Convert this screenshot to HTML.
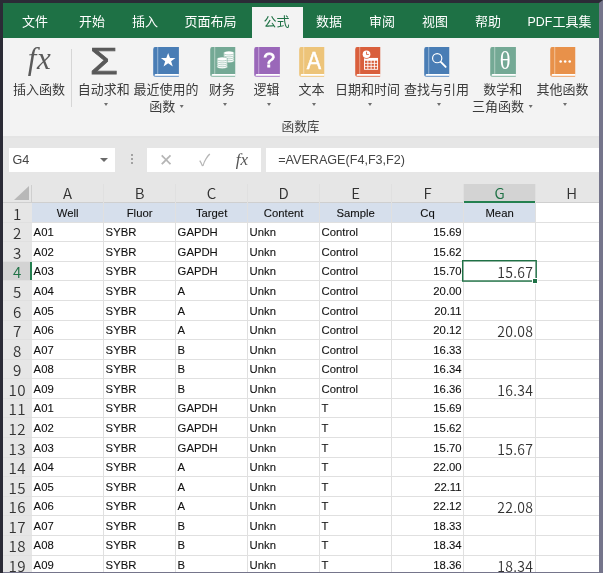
<!DOCTYPE html><html lang="zh-CN"><head><meta charset="utf-8"><title>Excel</title><style>*{box-sizing:border-box;margin:0;padding:0}
html,body{width:603px;height:573px;overflow:hidden;background:#fff}
body{font-family:"Liberation Sans","Noto Sans CJK SC",sans-serif;color:#333}
#app{position:relative;width:603px;height:573px;overflow:hidden;background:#fff;filter:blur(0.3px)}
#app div{position:absolute}
#bl{left:0;top:0;width:3px;height:573px;background:#2b2b36}
#bt{left:0;top:0;width:603px;height:3px;background:#2b2b36}
#br{left:599px;top:0;width:4px;height:573px;background:#75758b;clip-path:polygon(0 3px,4px 0,4px 100%,0 100%)}
#bb{left:3px;top:572px;width:600px;height:1px;background:#75758b}
#tabs{left:3px;top:3px;width:596px;height:35px;background:#1e7145}
.tab{top:1.3px;height:35px;line-height:36px;font-size:13px;color:#fff;text-align:center;white-space:nowrap;transform:translateX(-50%)}
#act{left:248.6px;top:4px;width:51px;height:31px;background:#f3f3f3}
.tab.on{color:#1e7145}
#ribbon{left:3px;top:38px;width:596px;height:98px;background:#f3f3f3}
#ribline{left:3px;top:136px;width:596px;height:1.5px;background:#e4e4e4}
#fbar{left:3px;top:137.5px;width:596px;height:46px;background:#e6e6e6}
.lbl{font-size:13px;line-height:16px;color:#3b3b3b;text-align:center;white-space:nowrap;transform:translateX(-50%)}
.ico{transform:translateX(-50%)}
.arr{width:0;height:0;border-left:2.8px solid transparent;border-right:2.8px solid transparent;border-top:3.3px solid #6e6e6e;transform:translateX(-50%)}
#grid{left:0;top:0;width:599px;height:572px}
.ch{top:183.5px;height:19px;line-height:17px;font-size:15px;text-align:center;color:#333;font-family:"Noto Sans CJK SC","Liberation Sans",sans-serif;font-weight:350;background:#e6e6e6}
.ch{border-bottom:1px solid #cfcfcf}
#corner{border-bottom:1px solid #cfcfcf}
.ch.sel{background:#d3d3d3;color:#1e7145;border-bottom:0}
.ch.sel::after{content:"";position:absolute;left:0;right:0;bottom:0;height:1.8px;background:#248050}
.rh{left:3px;width:28.6px;font-size:15.2px;letter-spacing:0.4px;text-align:center;color:#333;font-family:"Noto Sans CJK SC","Liberation Sans",sans-serif;font-weight:350;background:#e6e6e6;line-height:21.2px}
.rh.sel{background:#d3d3d3;color:#1e7145}
.rh.sel::after{content:"";position:absolute;right:0;top:0;bottom:0;width:1.8px;background:#248050}
.rhl{left:3px;width:28.6px;height:1px;background:#cfcfcf}
.chl{top:185px;height:17px;width:1px;background:#cfcfcf}
#hline{display:none}
.band{background:#d6dfec}
.hl{left:3px;width:596px;height:1px;background:#e0e0e0}
.vl{top:183.5px;height:389px;width:1px;background:#e0e0e0}
.c{font-size:11.3px;line-height:20.2px;color:#111;-webkit-text-stroke:0.1px #111;padding-left:2px;white-space:nowrap}
.c.hd{text-align:center;padding-left:0}
.c.num{text-align:right;padding-right:2px}
.c.mean{text-align:right;padding-right:2.3px;font-size:14px;letter-spacing:0.3px;-webkit-text-stroke:0;color:#333;font-family:"Noto Sans CJK SC","Liberation Sans",sans-serif;font-weight:350;line-height:22px}
.selbox{border:1.4px solid #1e7145}
.handle{width:3.9px;height:3.9px;background:#1e7145;border:0.9px solid #fff;box-sizing:content-box}
#ribbon svg{position:absolute}
#fx{font-family:"Liberation Serif",serif;font-style:italic;font-size:31px;line-height:36px;color:#5a5a5a;transform:translateX(-50%);white-space:nowrap;letter-spacing:0.6px}
#sigma{font-family:"Liberation Sans",sans-serif;font-size:36px;line-height:36px;color:#595959;-webkit-text-stroke:0.75px #595959;transform:translateX(-50%) scaleX(1.27)}
.sep{width:1px;background:#d6d6d6}
.ar{display:inline-block;width:0;height:0;border-left:2.8px solid transparent;border-right:2.8px solid transparent;border-top:3.3px solid #6e6e6e;vertical-align:middle;margin-left:1px;position:relative;top:-1px}
.glbl{font-size:12.7px;line-height:15px;color:#444;transform:translateX(-50%);white-space:nowrap}
#namebox{left:5.5px;top:10.6px;width:106.5px;height:24.2px;background:#fff;font-size:12.6px;line-height:25.6px;padding-left:4px;color:#444}
.dots{width:2px;height:2px;background:#a2a2a2}
#fbtns{left:144.3px;top:10.6px;width:114.2px;height:24.2px;background:#fff}
#fbtns span{position:absolute;line-height:25px}
#fxs{font-family:"Liberation Serif",serif;font-style:italic;font-size:17px;color:#555}
#finput{left:262.5px;top:10.6px;width:340px;height:24.2px;background:#fff;font-size:12.6px;line-height:25.6px;padding-left:12.7px;color:#444}
#corner{left:3px;top:183.5px;width:28.7px;height:19px;background:#e6e6e6}
#corner i{position:absolute;left:11px;top:2.5px;width:0;height:0;border-left:15px solid transparent;border-bottom:14.5px solid #b8b8b8}
</style></head><body><div id="app">
<div id="tabs">
<div id="act"></div>
<div class="tab" style="left:32px">文件</div>
<div class="tab" style="left:89px">开始</div>
<div class="tab" style="left:142px">插入</div>
<div class="tab" style="left:207.5px">页面布局</div>
<div class="tab on" style="left:273.4px">公式</div>
<div class="tab" style="left:326px">数据</div>
<div class="tab" style="left:379px">审阅</div>
<div class="tab" style="left:432px">视图</div>
<div class="tab" style="left:485px">帮助</div>
<div class="tab" style="left:556.5px"><span style="font-size:12.4px">PDF</span>工具集</div>
</div>
<div id="ribbon">
<div id="fx" style="left:36.5px;top:3px">fx</div>
<div class="sep" style="left:68.2px;top:11px;height:58px"></div>
<div id="sigma" style="left:100.7px;top:6.3px">Σ</div>
<div class="lbl" style="left:36px;top:44px">插入函数</div>
<div class="lbl" style="left:100.8px;top:44px">自动求和</div>
<div class="arr" style="left:103.3px;top:64.8px"></div>

<svg class="ico" style="left:163px;top:8.5px" width="25.6" height="30" viewBox="0 0 26 31" preserveAspectRatio="none"><path d="M2.5 0H26V31H2.8Q0 31 0 28.2V2.5Q0 0 2.5 0Z" fill="#7ea4cf"/><path d="M2.5 0H26V27.8H2.6Q0.9 27.8 0.9 29.4Q0.9 30.6 2 31Q0 30.6 0 28.2V2.5Q0 0 2.5 0Z" fill="#497db5"/><path d="M4.6 0V27.8" stroke="#9fbcdc" stroke-width="0.9"/><path d="M2.6 27.9H26V29.8H2.6Q1.6 29.8 1.6 28.85Q1.6 27.9 2.6 27.9Z" fill="#fff"/><path d="M15.2 6.2l1.9 5.2h5.5l-4.4 3.4 1.7 5.4-4.7-3.3-4.7 3.3 1.7-5.4-4.4-3.4h5.5z" fill="#fff"/></svg>
<div class="lbl" style="left:163px;top:44px">最近使用的</div>
<div class="lbl" style="left:163.5px;top:60.5px">函数 <i class="ar"></i></div>

<svg class="ico" style="left:219.5px;top:8.5px" width="25.6" height="30" viewBox="0 0 26 31" preserveAspectRatio="none"><path d="M2.5 0H26V31H2.8Q0 31 0 28.2V2.5Q0 0 2.5 0Z" fill="#9cc3b3"/><path d="M2.5 0H26V27.8H2.6Q0.9 27.8 0.9 29.4Q0.9 30.6 2 31Q0 30.6 0 28.2V2.5Q0 0 2.5 0Z" fill="#74a995"/><path d="M4.6 0V27.8" stroke="#b9d4c9" stroke-width="0.9"/><path d="M2.6 27.9H26V29.8H2.6Q1.6 29.8 1.6 28.85Q1.6 27.9 2.6 27.9Z" fill="#fff"/>
<g fill="#fff" stroke="#74a995" stroke-width="0.55"><ellipse cx="19" cy="14.2" rx="5.6" ry="2"/><ellipse cx="19" cy="12.2" rx="5.6" ry="2"/><ellipse cx="19" cy="10.2" rx="5.6" ry="2"/><ellipse cx="19" cy="8.2" rx="5.6" ry="2"/><ellipse cx="19" cy="6.2" rx="5.6" ry="2"/>
<ellipse cx="12.2" cy="20.4" rx="5.6" ry="2"/><ellipse cx="12.2" cy="18.4" rx="5.6" ry="2"/><ellipse cx="12.2" cy="16.4" rx="5.6" ry="2"/><ellipse cx="12.2" cy="14.4" rx="5.6" ry="2"/><ellipse cx="12.2" cy="12.4" rx="5.6" ry="2"/></g></svg>
<div class="lbl" style="left:219px;top:44px">财务</div>
<div class="arr" style="left:221.6px;top:64.8px"></div>

<svg class="ico" style="left:264px;top:8.5px" width="25.6" height="30" viewBox="0 0 26 31" preserveAspectRatio="none"><path d="M2.5 0H26V31H2.8Q0 31 0 28.2V2.5Q0 0 2.5 0Z" fill="#b892d0"/><path d="M2.5 0H26V27.8H2.6Q0.9 27.8 0.9 29.4Q0.9 30.6 2 31Q0 30.6 0 28.2V2.5Q0 0 2.5 0Z" fill="#9a67b9"/><path d="M4.6 0V27.8" stroke="#c9addb" stroke-width="0.9"/><path d="M2.6 27.9H26V29.8H2.6Q1.6 29.8 1.6 28.85Q1.6 27.9 2.6 27.9Z" fill="#fff"/><text x="15.2" y="20.9" font-family="Liberation Sans, sans-serif" font-size="21.5" fill="#fff" stroke="#fff" stroke-width="0.8" text-anchor="middle">?</text></svg>
<div class="lbl" style="left:263.5px;top:44px">逻辑</div>
<div class="arr" style="left:265.8px;top:64.8px"></div>

<svg class="ico" style="left:308.5px;top:8.5px" width="25.6" height="30" viewBox="0 0 26 31" preserveAspectRatio="none"><path d="M2.5 0H26V31H2.8Q0 31 0 28.2V2.5Q0 0 2.5 0Z" fill="#f1cf93"/><path d="M2.5 0H26V27.8H2.6Q0.9 27.8 0.9 29.4Q0.9 30.6 2 31Q0 30.6 0 28.2V2.5Q0 0 2.5 0Z" fill="#edc479"/><path d="M4.6 0V27.8" stroke="#f7e1b9" stroke-width="0.9"/><path d="M2.6 27.9H26V29.8H2.6Q1.6 29.8 1.6 28.85Q1.6 27.9 2.6 27.9Z" fill="#fff"/><text x="16.9" y="22.3" font-family="Liberation Sans, sans-serif" font-size="24.5" fill="#fff" stroke="#fff" stroke-width="0.5" text-anchor="middle" transform="scale(0.89 1)">A</text></svg>
<div class="lbl" style="left:308.5px;top:44px">文本</div>
<div class="arr" style="left:310.5px;top:64.8px"></div>

<svg class="ico" style="left:364.5px;top:8.5px" width="25.6" height="30" viewBox="0 0 26 31" preserveAspectRatio="none"><path d="M2.5 0H26V31H2.8Q0 31 0 28.2V2.5Q0 0 2.5 0Z" fill="#e58e74"/><path d="M2.5 0H26V27.8H2.6Q0.9 27.8 0.9 29.4Q0.9 30.6 2 31Q0 30.6 0 28.2V2.5Q0 0 2.5 0Z" fill="#d95f3c"/><path d="M4.6 0V27.8" stroke="#eba993" stroke-width="0.9"/><path d="M2.6 27.9H26V29.8H2.6Q1.6 29.8 1.6 28.85Q1.6 27.9 2.6 27.9Z" fill="#fff"/>
<rect x="9" y="11.3" width="14.2" height="12.2" fill="#fff"/><circle cx="11.5" cy="7.4" r="4.7" fill="#d95f3c"/><circle cx="11.5" cy="7.4" r="3.9" fill="#fff"/><path d="M11.5 4.9V7.7H13.8" stroke="#d95f3c" stroke-width="0.9" fill="none"/><g fill="#d95f3c"><rect x="10.0" y="14.2" width="2.4" height="2.2"/><rect x="13.3" y="14.2" width="2.4" height="2.2"/><rect x="16.6" y="14.2" width="2.4" height="2.2"/><rect x="19.9" y="14.2" width="2.4" height="2.2"/><rect x="10.0" y="17.3" width="2.4" height="2.2"/><rect x="13.3" y="17.3" width="2.4" height="2.2"/><rect x="16.6" y="17.3" width="2.4" height="2.2"/><rect x="19.9" y="17.3" width="2.4" height="2.2"/><rect x="10.0" y="20.4" width="2.4" height="2.2"/><rect x="13.3" y="20.4" width="2.4" height="2.2"/><rect x="16.6" y="20.4" width="2.4" height="2.2"/><rect x="19.9" y="20.4" width="2.4" height="2.2"/></g></svg>
<div class="lbl" style="left:364.5px;top:44px">日期和时间</div>
<div class="arr" style="left:366.5px;top:64.8px"></div>

<svg class="ico" style="left:433.5px;top:8.5px" width="25.6" height="30" viewBox="0 0 26 31" preserveAspectRatio="none"><path d="M2.5 0H26V31H2.8Q0 31 0 28.2V2.5Q0 0 2.5 0Z" fill="#7ea4cf"/><path d="M2.5 0H26V27.8H2.6Q0.9 27.8 0.9 29.4Q0.9 30.6 2 31Q0 30.6 0 28.2V2.5Q0 0 2.5 0Z" fill="#497db5"/><path d="M4.6 0V27.8" stroke="#9fbcdc" stroke-width="0.9"/><path d="M2.6 27.9H26V29.8H2.6Q1.6 29.8 1.6 28.85Q1.6 27.9 2.6 27.9Z" fill="#fff"/><circle cx="13.2" cy="11.6" r="4.7" fill="none" stroke="#fff" stroke-width="1.2"/><path d="M16.8 15.4L21.8 20.6" stroke="#fff" stroke-width="1.9" stroke-linecap="round"/></svg>
<div class="lbl" style="left:433.5px;top:44px">查找与引用</div>
<div class="arr" style="left:435.5px;top:64.8px"></div>

<svg class="ico" style="left:500px;top:8.5px" width="25.6" height="30" viewBox="0 0 26 31" preserveAspectRatio="none"><path d="M2.5 0H26V31H2.8Q0 31 0 28.2V2.5Q0 0 2.5 0Z" fill="#9cc3b3"/><path d="M2.5 0H26V27.8H2.6Q0.9 27.8 0.9 29.4Q0.9 30.6 2 31Q0 30.6 0 28.2V2.5Q0 0 2.5 0Z" fill="#74a995"/><path d="M4.6 0V27.8" stroke="#b9d4c9" stroke-width="0.9"/><path d="M2.6 27.9H26V29.8H2.6Q1.6 29.8 1.6 28.85Q1.6 27.9 2.6 27.9Z" fill="#fff"/><text x="17.4" y="22.3" font-family="Liberation Serif, serif" font-size="26" fill="#fff" text-anchor="middle" transform="scale(0.88 1)">θ</text></svg>
<div class="lbl" style="left:499.7px;top:44px">数学和</div>
<div class="lbl" style="left:499.3px;top:60.5px">三角函数 <i class="ar"></i></div>

<svg class="ico" style="left:559.5px;top:8.5px" width="25.6" height="30" viewBox="0 0 26 31" preserveAspectRatio="none"><path d="M2.5 0H26V31H2.8Q0 31 0 28.2V2.5Q0 0 2.5 0Z" fill="#efb07e"/><path d="M2.5 0H26V27.8H2.6Q0.9 27.8 0.9 29.4Q0.9 30.6 2 31Q0 30.6 0 28.2V2.5Q0 0 2.5 0Z" fill="#e8914a"/><path d="M4.6 0V27.8" stroke="#f4c9a5" stroke-width="0.9"/><path d="M2.6 27.9H26V29.8H2.6Q1.6 29.8 1.6 28.85Q1.6 27.9 2.6 27.9Z" fill="#fff"/><circle cx="10.6" cy="15" r="1.3" fill="#fff"/><circle cx="15.2" cy="15" r="1.3" fill="#fff"/><circle cx="19.8" cy="15" r="1.3" fill="#fff"/></svg>
<div class="lbl" style="left:559.5px;top:44px">其他函数</div>
<div class="arr" style="left:561.7px;top:64.8px"></div>

<div class="glbl" style="left:297.5px;top:82.3px">函数库</div>
</div>
<div id="ribline"></div>
<div id="fbar">
<div id="namebox">G4<i class="ar" style="position:absolute;left:90.5px;top:9.5px;border-top-color:#6a6a6a;border-left-width:4.2px;border-right-width:4.2px;border-top-width:4.5px"></i></div>
<div class="dots" style="left:127.5px;top:16px"></div><div class="dots" style="left:127.5px;top:20px"></div><div class="dots" style="left:127.5px;top:24px"></div>
<div id="fbtns"><span style="left:12px;font-size:17px;color:#b5b5b5;top:0px">✕</span><span style="left:52px;font-size:16px;color:#b5b5b5;top:0px">✓</span><span id="fxs" style="left:88.5px;top:-1px">fx</span></div>
<div id="finput">=AVERAGE(F4,F3,F2)</div>
</div>

<div id="grid"><div id="corner"><i></i></div>
<div class="ch" style="left:31.60px;width:72.00px">A</div>
<div class="ch" style="left:103.60px;width:72.00px">B</div>
<div class="ch" style="left:175.60px;width:72.00px">C</div>
<div class="ch" style="left:247.60px;width:72.00px">D</div>
<div class="ch" style="left:319.60px;width:72.00px">E</div>
<div class="ch" style="left:391.60px;width:72.00px">F</div>
<div class="ch sel" style="left:463.60px;width:72.00px">G</div>
<div class="ch" style="left:535.60px;width:72.00px">H</div>
<div class="rh" style="top:202.60px;height:19.58px">1</div>
<div class="rh" style="top:222.18px;height:19.58px">2</div>
<div class="rh" style="top:241.76px;height:19.58px">3</div>
<div class="rh sel" style="top:261.34px;height:19.58px">4</div>
<div class="rh" style="top:280.92px;height:19.58px">5</div>
<div class="rh" style="top:300.50px;height:19.58px">6</div>
<div class="rh" style="top:320.08px;height:19.58px">7</div>
<div class="rh" style="top:339.66px;height:19.58px">8</div>
<div class="rh" style="top:359.24px;height:19.58px">9</div>
<div class="rh" style="top:378.82px;height:19.58px">10</div>
<div class="rh" style="top:398.40px;height:19.58px">11</div>
<div class="rh" style="top:417.98px;height:19.58px">12</div>
<div class="rh" style="top:437.56px;height:19.58px">13</div>
<div class="rh" style="top:457.14px;height:19.58px">14</div>
<div class="rh" style="top:476.72px;height:19.58px">15</div>
<div class="rh" style="top:496.30px;height:19.58px">16</div>
<div class="rh" style="top:515.88px;height:19.58px">17</div>
<div class="rh" style="top:535.46px;height:19.58px">18</div>
<div class="rh" style="top:555.04px;height:19.58px">19</div>
<div class="band" style="left:31.60px;top:202.60px;width:504.00px;height:19.58px"></div>
<div id="hline"></div>
<div class="rhl" style="top:221.68px"></div>
<div class="rhl" style="top:241.26px"></div>
<div class="rhl" style="top:260.84px"></div>
<div class="rhl" style="top:280.42px"></div>
<div class="rhl" style="top:300.00px"></div>
<div class="rhl" style="top:319.58px"></div>
<div class="rhl" style="top:339.16px"></div>
<div class="rhl" style="top:358.74px"></div>
<div class="rhl" style="top:378.32px"></div>
<div class="rhl" style="top:397.90px"></div>
<div class="rhl" style="top:417.48px"></div>
<div class="rhl" style="top:437.06px"></div>
<div class="rhl" style="top:456.64px"></div>
<div class="rhl" style="top:476.22px"></div>
<div class="rhl" style="top:495.80px"></div>
<div class="rhl" style="top:515.38px"></div>
<div class="rhl" style="top:534.96px"></div>
<div class="rhl" style="top:554.54px"></div>
<div class="rhl" style="top:574.12px"></div>
<div class="chl" style="left:31.10px"></div>
<div class="chl" style="left:103.10px"></div>
<div class="chl" style="left:175.10px"></div>
<div class="chl" style="left:247.10px"></div>
<div class="chl" style="left:319.10px"></div>
<div class="chl" style="left:391.10px"></div>
<div class="chl" style="left:607.10px"></div>
<div class="hl" style="top:221.68px"></div>
<div class="hl" style="top:241.26px"></div>
<div class="hl" style="top:260.84px"></div>
<div class="hl" style="top:280.42px"></div>
<div class="hl" style="top:300.00px"></div>
<div class="hl" style="top:319.58px"></div>
<div class="hl" style="top:339.16px"></div>
<div class="hl" style="top:358.74px"></div>
<div class="hl" style="top:378.32px"></div>
<div class="hl" style="top:397.90px"></div>
<div class="hl" style="top:417.48px"></div>
<div class="hl" style="top:437.06px"></div>
<div class="hl" style="top:456.64px"></div>
<div class="hl" style="top:476.22px"></div>
<div class="hl" style="top:495.80px"></div>
<div class="hl" style="top:515.38px"></div>
<div class="hl" style="top:534.96px"></div>
<div class="hl" style="top:554.54px"></div>
<div class="hl" style="top:574.12px"></div>
<div class="vl" style="left:103.10px"></div>
<div class="vl" style="left:175.10px"></div>
<div class="vl" style="left:247.10px"></div>
<div class="vl" style="left:319.10px"></div>
<div class="vl" style="left:391.10px"></div>
<div class="vl" style="left:463.10px"></div>
<div class="vl" style="left:535.10px"></div>
<div class="vl" style="left:607.10px"></div>
<div class="c hd" style="left:31.60px;top:202.60px;width:72.00px;height:19.58px">Well</div>
<div class="c hd" style="left:103.60px;top:202.60px;width:72.00px;height:19.58px">Fluor</div>
<div class="c hd" style="left:175.60px;top:202.60px;width:72.00px;height:19.58px">Target</div>
<div class="c hd" style="left:247.60px;top:202.60px;width:72.00px;height:19.58px">Content</div>
<div class="c hd" style="left:319.60px;top:202.60px;width:72.00px;height:19.58px">Sample</div>
<div class="c hd" style="left:391.60px;top:202.60px;width:72.00px;height:19.58px">Cq</div>
<div class="c hd" style="left:463.60px;top:202.60px;width:72.00px;height:19.58px">Mean</div>
<div class="c" style="left:31.60px;top:222.18px;width:72.00px;height:19.58px">A01</div>
<div class="c" style="left:103.60px;top:222.18px;width:72.00px;height:19.58px">SYBR</div>
<div class="c" style="left:175.60px;top:222.18px;width:72.00px;height:19.58px">GAPDH</div>
<div class="c" style="left:247.60px;top:222.18px;width:72.00px;height:19.58px">Unkn</div>
<div class="c" style="left:319.60px;top:222.18px;width:72.00px;height:19.58px">Control</div>
<div class="c num" style="left:391.60px;top:222.18px;width:72.00px;height:19.58px">15.69</div>
<div class="c" style="left:31.60px;top:241.76px;width:72.00px;height:19.58px">A02</div>
<div class="c" style="left:103.60px;top:241.76px;width:72.00px;height:19.58px">SYBR</div>
<div class="c" style="left:175.60px;top:241.76px;width:72.00px;height:19.58px">GAPDH</div>
<div class="c" style="left:247.60px;top:241.76px;width:72.00px;height:19.58px">Unkn</div>
<div class="c" style="left:319.60px;top:241.76px;width:72.00px;height:19.58px">Control</div>
<div class="c num" style="left:391.60px;top:241.76px;width:72.00px;height:19.58px">15.62</div>
<div class="c" style="left:31.60px;top:261.34px;width:72.00px;height:19.58px">A03</div>
<div class="c" style="left:103.60px;top:261.34px;width:72.00px;height:19.58px">SYBR</div>
<div class="c" style="left:175.60px;top:261.34px;width:72.00px;height:19.58px">GAPDH</div>
<div class="c" style="left:247.60px;top:261.34px;width:72.00px;height:19.58px">Unkn</div>
<div class="c" style="left:319.60px;top:261.34px;width:72.00px;height:19.58px">Control</div>
<div class="c num" style="left:391.60px;top:261.34px;width:72.00px;height:19.58px">15.70</div>
<div class="c mean" style="left:463.60px;top:261.34px;width:72.00px;height:19.58px">15.67</div>
<div class="c" style="left:31.60px;top:280.92px;width:72.00px;height:19.58px">A04</div>
<div class="c" style="left:103.60px;top:280.92px;width:72.00px;height:19.58px">SYBR</div>
<div class="c" style="left:175.60px;top:280.92px;width:72.00px;height:19.58px">A</div>
<div class="c" style="left:247.60px;top:280.92px;width:72.00px;height:19.58px">Unkn</div>
<div class="c" style="left:319.60px;top:280.92px;width:72.00px;height:19.58px">Control</div>
<div class="c num" style="left:391.60px;top:280.92px;width:72.00px;height:19.58px">20.00</div>
<div class="c" style="left:31.60px;top:300.50px;width:72.00px;height:19.58px">A05</div>
<div class="c" style="left:103.60px;top:300.50px;width:72.00px;height:19.58px">SYBR</div>
<div class="c" style="left:175.60px;top:300.50px;width:72.00px;height:19.58px">A</div>
<div class="c" style="left:247.60px;top:300.50px;width:72.00px;height:19.58px">Unkn</div>
<div class="c" style="left:319.60px;top:300.50px;width:72.00px;height:19.58px">Control</div>
<div class="c num" style="left:391.60px;top:300.50px;width:72.00px;height:19.58px">20.11</div>
<div class="c" style="left:31.60px;top:320.08px;width:72.00px;height:19.58px">A06</div>
<div class="c" style="left:103.60px;top:320.08px;width:72.00px;height:19.58px">SYBR</div>
<div class="c" style="left:175.60px;top:320.08px;width:72.00px;height:19.58px">A</div>
<div class="c" style="left:247.60px;top:320.08px;width:72.00px;height:19.58px">Unkn</div>
<div class="c" style="left:319.60px;top:320.08px;width:72.00px;height:19.58px">Control</div>
<div class="c num" style="left:391.60px;top:320.08px;width:72.00px;height:19.58px">20.12</div>
<div class="c mean" style="left:463.60px;top:320.08px;width:72.00px;height:19.58px">20.08</div>
<div class="c" style="left:31.60px;top:339.66px;width:72.00px;height:19.58px">A07</div>
<div class="c" style="left:103.60px;top:339.66px;width:72.00px;height:19.58px">SYBR</div>
<div class="c" style="left:175.60px;top:339.66px;width:72.00px;height:19.58px">B</div>
<div class="c" style="left:247.60px;top:339.66px;width:72.00px;height:19.58px">Unkn</div>
<div class="c" style="left:319.60px;top:339.66px;width:72.00px;height:19.58px">Control</div>
<div class="c num" style="left:391.60px;top:339.66px;width:72.00px;height:19.58px">16.33</div>
<div class="c" style="left:31.60px;top:359.24px;width:72.00px;height:19.58px">A08</div>
<div class="c" style="left:103.60px;top:359.24px;width:72.00px;height:19.58px">SYBR</div>
<div class="c" style="left:175.60px;top:359.24px;width:72.00px;height:19.58px">B</div>
<div class="c" style="left:247.60px;top:359.24px;width:72.00px;height:19.58px">Unkn</div>
<div class="c" style="left:319.60px;top:359.24px;width:72.00px;height:19.58px">Control</div>
<div class="c num" style="left:391.60px;top:359.24px;width:72.00px;height:19.58px">16.34</div>
<div class="c" style="left:31.60px;top:378.82px;width:72.00px;height:19.58px">A09</div>
<div class="c" style="left:103.60px;top:378.82px;width:72.00px;height:19.58px">SYBR</div>
<div class="c" style="left:175.60px;top:378.82px;width:72.00px;height:19.58px">B</div>
<div class="c" style="left:247.60px;top:378.82px;width:72.00px;height:19.58px">Unkn</div>
<div class="c" style="left:319.60px;top:378.82px;width:72.00px;height:19.58px">Control</div>
<div class="c num" style="left:391.60px;top:378.82px;width:72.00px;height:19.58px">16.36</div>
<div class="c mean" style="left:463.60px;top:378.82px;width:72.00px;height:19.58px">16.34</div>
<div class="c" style="left:31.60px;top:398.40px;width:72.00px;height:19.58px">A01</div>
<div class="c" style="left:103.60px;top:398.40px;width:72.00px;height:19.58px">SYBR</div>
<div class="c" style="left:175.60px;top:398.40px;width:72.00px;height:19.58px">GAPDH</div>
<div class="c" style="left:247.60px;top:398.40px;width:72.00px;height:19.58px">Unkn</div>
<div class="c" style="left:319.60px;top:398.40px;width:72.00px;height:19.58px">T</div>
<div class="c num" style="left:391.60px;top:398.40px;width:72.00px;height:19.58px">15.69</div>
<div class="c" style="left:31.60px;top:417.98px;width:72.00px;height:19.58px">A02</div>
<div class="c" style="left:103.60px;top:417.98px;width:72.00px;height:19.58px">SYBR</div>
<div class="c" style="left:175.60px;top:417.98px;width:72.00px;height:19.58px">GAPDH</div>
<div class="c" style="left:247.60px;top:417.98px;width:72.00px;height:19.58px">Unkn</div>
<div class="c" style="left:319.60px;top:417.98px;width:72.00px;height:19.58px">T</div>
<div class="c num" style="left:391.60px;top:417.98px;width:72.00px;height:19.58px">15.62</div>
<div class="c" style="left:31.60px;top:437.56px;width:72.00px;height:19.58px">A03</div>
<div class="c" style="left:103.60px;top:437.56px;width:72.00px;height:19.58px">SYBR</div>
<div class="c" style="left:175.60px;top:437.56px;width:72.00px;height:19.58px">GAPDH</div>
<div class="c" style="left:247.60px;top:437.56px;width:72.00px;height:19.58px">Unkn</div>
<div class="c" style="left:319.60px;top:437.56px;width:72.00px;height:19.58px">T</div>
<div class="c num" style="left:391.60px;top:437.56px;width:72.00px;height:19.58px">15.70</div>
<div class="c mean" style="left:463.60px;top:437.56px;width:72.00px;height:19.58px">15.67</div>
<div class="c" style="left:31.60px;top:457.14px;width:72.00px;height:19.58px">A04</div>
<div class="c" style="left:103.60px;top:457.14px;width:72.00px;height:19.58px">SYBR</div>
<div class="c" style="left:175.60px;top:457.14px;width:72.00px;height:19.58px">A</div>
<div class="c" style="left:247.60px;top:457.14px;width:72.00px;height:19.58px">Unkn</div>
<div class="c" style="left:319.60px;top:457.14px;width:72.00px;height:19.58px">T</div>
<div class="c num" style="left:391.60px;top:457.14px;width:72.00px;height:19.58px">22.00</div>
<div class="c" style="left:31.60px;top:476.72px;width:72.00px;height:19.58px">A05</div>
<div class="c" style="left:103.60px;top:476.72px;width:72.00px;height:19.58px">SYBR</div>
<div class="c" style="left:175.60px;top:476.72px;width:72.00px;height:19.58px">A</div>
<div class="c" style="left:247.60px;top:476.72px;width:72.00px;height:19.58px">Unkn</div>
<div class="c" style="left:319.60px;top:476.72px;width:72.00px;height:19.58px">T</div>
<div class="c num" style="left:391.60px;top:476.72px;width:72.00px;height:19.58px">22.11</div>
<div class="c" style="left:31.60px;top:496.30px;width:72.00px;height:19.58px">A06</div>
<div class="c" style="left:103.60px;top:496.30px;width:72.00px;height:19.58px">SYBR</div>
<div class="c" style="left:175.60px;top:496.30px;width:72.00px;height:19.58px">A</div>
<div class="c" style="left:247.60px;top:496.30px;width:72.00px;height:19.58px">Unkn</div>
<div class="c" style="left:319.60px;top:496.30px;width:72.00px;height:19.58px">T</div>
<div class="c num" style="left:391.60px;top:496.30px;width:72.00px;height:19.58px">22.12</div>
<div class="c mean" style="left:463.60px;top:496.30px;width:72.00px;height:19.58px">22.08</div>
<div class="c" style="left:31.60px;top:515.88px;width:72.00px;height:19.58px">A07</div>
<div class="c" style="left:103.60px;top:515.88px;width:72.00px;height:19.58px">SYBR</div>
<div class="c" style="left:175.60px;top:515.88px;width:72.00px;height:19.58px">B</div>
<div class="c" style="left:247.60px;top:515.88px;width:72.00px;height:19.58px">Unkn</div>
<div class="c" style="left:319.60px;top:515.88px;width:72.00px;height:19.58px">T</div>
<div class="c num" style="left:391.60px;top:515.88px;width:72.00px;height:19.58px">18.33</div>
<div class="c" style="left:31.60px;top:535.46px;width:72.00px;height:19.58px">A08</div>
<div class="c" style="left:103.60px;top:535.46px;width:72.00px;height:19.58px">SYBR</div>
<div class="c" style="left:175.60px;top:535.46px;width:72.00px;height:19.58px">B</div>
<div class="c" style="left:247.60px;top:535.46px;width:72.00px;height:19.58px">Unkn</div>
<div class="c" style="left:319.60px;top:535.46px;width:72.00px;height:19.58px">T</div>
<div class="c num" style="left:391.60px;top:535.46px;width:72.00px;height:19.58px">18.34</div>
<div class="c" style="left:31.60px;top:555.04px;width:72.00px;height:19.58px">A09</div>
<div class="c" style="left:103.60px;top:555.04px;width:72.00px;height:19.58px">SYBR</div>
<div class="c" style="left:175.60px;top:555.04px;width:72.00px;height:19.58px">B</div>
<div class="c" style="left:247.60px;top:555.04px;width:72.00px;height:19.58px">Unkn</div>
<div class="c" style="left:319.60px;top:555.04px;width:72.00px;height:19.58px">T</div>
<div class="c num" style="left:391.60px;top:555.04px;width:72.00px;height:19.58px">18.36</div>
<div class="c mean" style="left:463.60px;top:555.04px;width:72.00px;height:19.58px">18.34</div>
<svg class="selsvg" style="position:absolute;left:461.90px;top:260.14px" width="74.90" height="21.78"><rect x="0.7" y="0.7" width="73.50" height="20.38" fill="none" stroke="#1e7145" stroke-width="1.4"/></svg>
<div class="handle" style="left:532.30px;top:277.92px"></div>
</div>
<div id="bl"></div><div id="bt"></div><div id="br"></div><div id="bb"></div>
</div></body></html>
